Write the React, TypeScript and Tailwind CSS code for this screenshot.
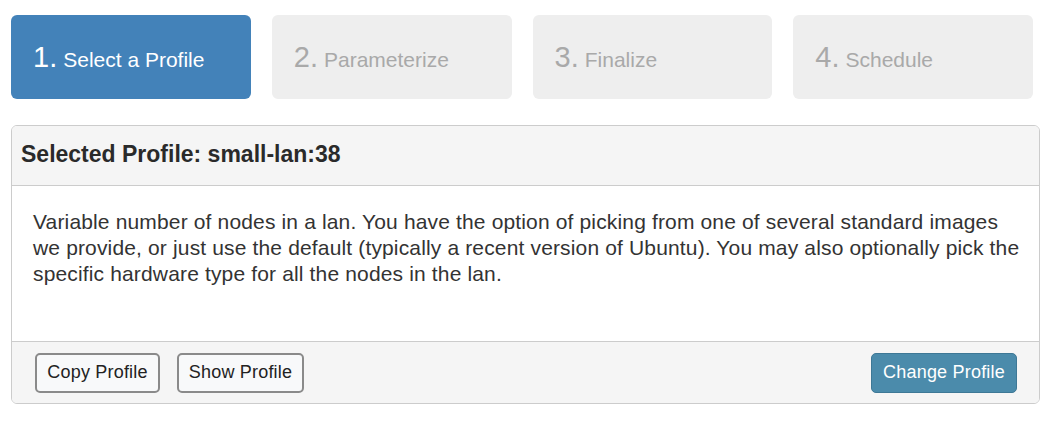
export default function App() {
  const steps = ["Select a Profile", "Parameterize", "Finalize", "Schedule"];

  return (
    <div className="min-h-screen bg-white font-['Liberation_Sans',Arial,sans-serif] text-[#333]">
      <div className="pl-[11px] pr-[10px] pt-[15px]">
        {/* STEPS */}
        <div className="grid grid-cols-4 gap-[21px] pr-[7px]">
          {steps.map((label, i) => (
            <div
              key={label}
              className={`h-[84px] rounded-[6px] flex items-center pl-[22px] ${
                i === 0 ? "bg-[#4382b9] text-white" : "bg-[#eeeeee] text-[#a9a9a9]"
              }`}
            >
              <span className="text-[29px] leading-none">{i + 1}.</span>
              <span className="text-[21px] leading-none ml-[6px] mt-[4px]">{label}</span>
            </div>
          ))}
        </div>

        {/* PANEL */}
        <div className="mt-[26px] border border-[#cccccc] rounded-[6px] overflow-hidden">
          <div className="h-[60px] bg-[#f5f5f5] border-b border-[#cccccc] flex items-center px-[9px] pb-[2px]">
            <h3 className="text-[23px] font-bold text-[#2a2a2a]">
              Selected Profile: small-lan:38
            </h3>
          </div>

          <div className="bg-white pl-[21px] pr-[10px] pt-[23px] pb-[54px] text-[21px] tracking-[0.15px] leading-[26px] text-[#333] whitespace-nowrap">
            Variable number of nodes in a lan. You have the option of picking from one of several standard images
            <br />
            we provide, or just use the default (typically a recent version of Ubuntu). You may also optionally pick the
            <br />
            specific hardware type for all the nodes in the lan.
          </div>

          <div className="h-[62px] bg-[#f5f5f5] border-t border-[#cccccc] flex items-center justify-between pl-[23px] pr-[22px]">
            <div className="flex gap-[17px]">
              <button className="h-[40px] w-[125px] rounded-[5px] border-2 border-[#8a8a8a] bg-[#f8f9fa] text-[18px] tracking-[0.2px] text-[#222]">
                Copy Profile
              </button>
              <button className="h-[40px] w-[127px] rounded-[5px] border-2 border-[#8a8a8a] bg-[#f8f9fa] text-[18px] tracking-[0.2px] text-[#222]">
                Show Profile
              </button>
            </div>
            <button className="h-[40px] w-[146px] rounded-[5px] border border-[#3e7896] bg-[#4b8bab] text-[18px] tracking-[0.2px] text-white">
              Change Profile
            </button>
          </div>
        </div>
      </div>
    </div>
  );
}
